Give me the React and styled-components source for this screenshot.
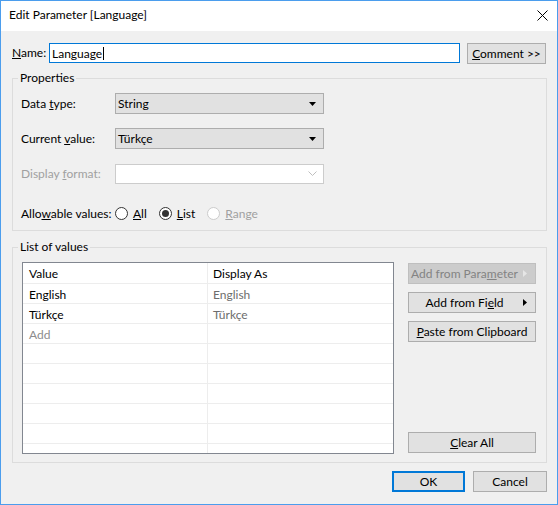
import React from 'react';
import styled, { createGlobalStyle, css } from 'styled-components';

const Global = createGlobalStyle`
  html, body { margin: 0; padding: 0; background: #fff; }
  body { font-family: Lato, "Noto Sans", sans-serif; font-size: 12px; color: #000; }
  * { box-sizing: border-box; }
`;

const Window = styled.div`
  width: 558px;
  height: 505px;
  border: 1px solid #4b9ded;
  background: #f0f0f0;
  display: flex;
  flex-direction: column;
`;

const TitleBar = styled.div`
  flex: none;
  height: 30px;
  background: #fff;
  display: flex;
  align-items: center;
  padding: 0 9px 0 8px;
`;

const Title = styled.div`
  flex: 1;
  line-height: 16px;
  margin-top: -2px;
`;

const CloseIcon = styled.svg`
  width: 11px;
  height: 11px;
  display: block;
  margin-top: -1px;
`;

const Body = styled.div`
  flex: 1;
  display: flex;
  flex-direction: column;
  padding: 12px 10px 0 11px;
`;

const Acc = styled.span`
  text-decoration: underline;
  text-underline-offset: 1px;
`;

const NameRow = styled.div`
  display: flex;
  align-items: flex-start;
  height: 21px;
`;

const NameLabel = styled.div`
  width: 37px;
  line-height: 20px;
`;

const TextInput = styled.div`
  width: 411px;
  height: 20px;
  background: #fff;
  border: 1px solid #0078d7;
  padding-left: 2px;
  display: flex;
  align-items: center;
`;

const Caret = styled.span`
  display: inline-block;
  width: 1px;
  height: 13px;
  background: #000;
  margin-left: 1px;
`;

const Button = styled.button`
  font: inherit;
  height: 21px;
  width: ${(p) => p.$w || 128}px;
  margin-left: ${(p) => p.$ml || 0}px;
  padding: 0;
  background: #e1e1e1;
  border: 1px solid #adadad;
  color: #000;
  display: flex;
  align-items: center;
  justify-content: center;
  flex: none;
  ${(p) =>
    p.$disabled &&
    css`
      background: #cccccc;
      border-color: #bfbfbf;
      color: #838383;
    `}
  ${(p) =>
    p.$default &&
    css`
      border: 2px solid #0078d7;
    `}
`;

const MenuLabel = styled.span`
  flex: 1;
  text-align: center;
`;

const MenuArrow = styled.svg`
  width: 4px;
  height: 7px;
  display: block;
  margin-right: 8px;
  margin-left: 3px;
`;

const Group = styled.fieldset`
  margin: ${(p) => p.$mt}px 0 0 0;
  border: 1px solid #dcdcdc;
  padding: ${(p) => p.$pt}px 10px ${(p) => p.$pb}px ${(p) => p.$pl}px;
  min-width: 0;
`;

const Legend = styled.legend`
  padding: 0 2px;
  margin-left: ${(p) => p.$ml}px;
  line-height: 16px;
`;

const Stack = styled.div`
  display: flex;
  flex-direction: column;
  gap: 14px;
`;

const FieldRow = styled.div`
  display: flex;
  align-items: center;
  height: 21px;
  margin-top: ${(p) => p.$mt || 0}px;
`;

const FieldLabel = styled.div`
  width: 94px;
  color: ${(p) => (p.$disabled ? '#a0a0a0' : '#000')};
`;

const Combo = styled.div`
  width: 209px;
  height: ${(p) => (p.$disabled ? 20 : 21)}px;
  display: flex;
  align-items: center;
  padding: 0 7px 0 2px;
  background: ${(p) => (p.$disabled ? '#fff' : '#e1e1e1')};
  border: 1px solid ${(p) => (p.$disabled ? '#cccccc' : '#adadad')};
`;

const ComboText = styled.span`
  flex: 1;
`;

const DownArrow = styled.svg`
  width: 7px;
  height: 4px;
  display: block;
`;

const Chevron = styled.svg`
  width: 9px;
  height: 5px;
  display: block;
  margin-right: -1px;
`;

const RadioGroup = styled.div`
  display: flex;
  align-items: center;
  gap: 12px;
`;

const RadioItem = styled.label`
  display: flex;
  align-items: center;
  gap: 5px;
  color: ${(p) => (p.$disabled ? '#a0a0a0' : '#000')};
`;

const RadioCircle = styled.span`
  width: 13px;
  height: 13px;
  border-radius: 50%;
  border: 1px solid ${(p) => (p.$disabled ? '#cccccc' : '#333333')};
  background: #fff;
  display: flex;
  align-items: center;
  justify-content: center;
`;

const RadioDot = styled.span`
  width: 7px;
  height: 7px;
  border-radius: 50%;
  background: #333;
`;

const ListLayout = styled.div`
  display: flex;
  gap: 14px;
`;

const Table = styled.div`
  width: 372px;
  height: 192px;
  border: 1px solid #828790;
  background: #fff;
  overflow: hidden;
  display: grid;
  grid-template-columns: 185px 185px;
  grid-auto-rows: 20px;
`;

const Cell = styled.div`
  display: flex;
  align-items: center;
  padding-left: ${(p) => (p.$col === 0 ? 6 : 5)}px;
  border-right: ${(p) => (p.$col === 0 ? '1px solid #ededed' : 'none')};
  border-top: ${(p) => (p.$header ? 'none' : '1px solid #ededed')};
  color: ${(p) => p.$color || '#000'};
  padding-top: ${(p) => (p.$header ? 0 : 1)}px;
`;

const SideButtons = styled.div`
  width: 128px;
  display: flex;
  flex-direction: column;
  gap: 8px;
  padding: 1px 0 1px;
`;

const Spacer = styled.div`
  flex: 1;
`;

const Footer = styled.div`
  display: flex;
  justify-content: flex-end;
  gap: 8px;
  margin-top: 8px;
`;

const rows = [
  ['English', 'English', '#000', '#6d6d6d'],
  ['Türkçe', 'Türkçe', '#000', '#6d6d6d'],
  ['Add', '', '#8c8c8c', '#000'],
  ['', ''],
  ['', ''],
  ['', ''],
  ['', ''],
  ['', ''],
  ['', ''],
];

export default function App() {
  return (
    <>
      <Global />
      <Window>
        <TitleBar>
          <Title>Edit Parameter [Language]</Title>
          <CloseIcon viewBox="0 0 11 11">
            <path d="M0.5 0.5 L10.5 10.5 M10.5 0.5 L0.5 10.5" stroke="#000" strokeWidth="1" fill="none" />
          </CloseIcon>
        </TitleBar>
        <Body>
          <NameRow>
            <NameLabel>
              <Acc>N</Acc>ame:
            </NameLabel>
            <TextInput>
              Language
              <Caret />
            </TextInput>
            <Button $w={79} $ml={7}>
              <span>
                <Acc>C</Acc>omment &gt;&gt;
              </span>
            </Button>
          </NameRow>

          <Group $mt={6} $pt={7} $pb={6} $pl={8}>
            <Legend $ml={-3}>Properties</Legend>
            <Stack>
              <FieldRow>
                <FieldLabel>
                  Data <Acc>t</Acc>ype:
                </FieldLabel>
                <Combo>
                  <ComboText>String</ComboText>
                  <DownArrow viewBox="0 0 7 4">
                    <path d="M0 0 H7 L3.5 4 Z" fill="#000" />
                  </DownArrow>
                </Combo>
              </FieldRow>
              <FieldRow>
                <FieldLabel>
                  Current <Acc>v</Acc>alue:
                </FieldLabel>
                <Combo>
                  <ComboText>Türkçe</ComboText>
                  <DownArrow viewBox="0 0 7 4">
                    <path d="M0 0 H7 L3.5 4 Z" fill="#000" />
                  </DownArrow>
                </Combo>
              </FieldRow>
              <FieldRow>
                <FieldLabel $disabled>
                  Display <Acc>f</Acc>ormat:
                </FieldLabel>
                <Combo $disabled>
                  <ComboText />
                  <Chevron viewBox="0 0 9 5">
                    <path d="M0.5 0.5 L4.5 4.5 L8.5 0.5" stroke="#bfbfbf" strokeWidth="1" fill="none" />
                  </Chevron>
                </Combo>
              </FieldRow>
              <FieldRow $mt={5}>
                <FieldLabel>
                  Allo<Acc>w</Acc>able values:
                </FieldLabel>
                <RadioGroup>
                  <RadioItem>
                    <RadioCircle />
                    <span>
                      <Acc>A</Acc>ll
                    </span>
                  </RadioItem>
                  <RadioItem>
                    <RadioCircle>
                      <RadioDot />
                    </RadioCircle>
                    <span>
                      <Acc>L</Acc>ist
                    </span>
                  </RadioItem>
                  <RadioItem $disabled>
                    <RadioCircle $disabled />
                    <span>
                      <Acc>R</Acc>ange
                    </span>
                  </RadioItem>
                </RadioGroup>
              </FieldRow>
            </Stack>
          </Group>

          <Group $mt={8} $pt={7} $pb={8} $pl={9}>
            <Legend $ml={-4}>List of values</Legend>
            <ListLayout>
              <Table>
                <Cell $header $col={0}>Value</Cell>
                <Cell $header $col={1}>Display As</Cell>
                {rows.map((r, i) => (
                  <React.Fragment key={i}>
                    <Cell $col={0} $color={r[2]}>{r[0]}</Cell>
                    <Cell $col={1} $color={r[3]}>{r[1]}</Cell>
                  </React.Fragment>
                ))}
              </Table>
              <SideButtons>
                <Button $disabled>
                  <MenuLabel>
                    Add from Para<Acc>m</Acc>eter
                  </MenuLabel>
                  <MenuArrow viewBox="0 0 4 7">
                    <path d="M0 0 L4 3.5 L0 7 Z" fill="#e6e6e6" />
                  </MenuArrow>
                </Button>
                <Button>
                  <MenuLabel>
                    Add from Fi<Acc>e</Acc>ld
                  </MenuLabel>
                  <MenuArrow viewBox="0 0 4 7">
                    <path d="M0 0 L4 3.5 L0 7 Z" fill="#000" />
                  </MenuArrow>
                </Button>
                <Button>
                  <span>
                    <Acc>P</Acc>aste from Clipboard
                  </span>
                </Button>
                <Spacer />
                <Button>
                  <span>
                    <Acc>C</Acc>lear All
                  </span>
                </Button>
              </SideButtons>
            </ListLayout>
          </Group>

          <Footer>
            <Button $w={73} $default>OK</Button>
            <Button $w={74}>Cancel</Button>
          </Footer>
        </Body>
      </Window>
    </>
  );
}
